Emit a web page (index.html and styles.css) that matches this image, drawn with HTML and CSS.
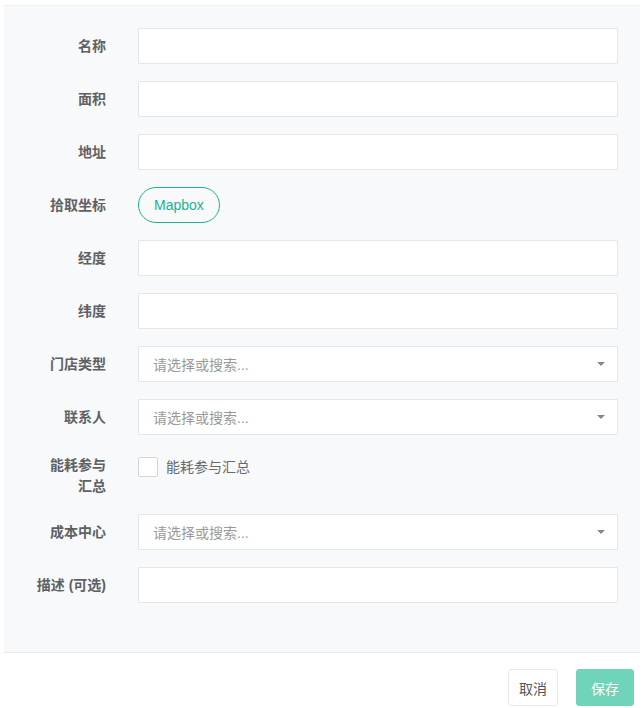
FILE: index.html
```html
<!DOCTYPE html>
<html lang="zh">
<head>
<meta charset="utf-8">
<link rel="stylesheet" href="styles.css">
</head>
<body>
<div class="panel">
  <div class="row"><label class="lbl">名称</label><div class="input"></div></div>
  <div class="row"><label class="lbl">面积</label><div class="input"></div></div>
  <div class="row"><label class="lbl">地址</label><div class="input"></div></div>
  <div class="row"><label class="lbl">拾取坐标</label><div><button class="pill">Mapbox</button></div></div>
  <div class="row"><label class="lbl">经度</label><div class="input"></div></div>
  <div class="row"><label class="lbl">纬度</label><div class="input"></div></div>
  <div class="row"><label class="lbl">门店类型</label><div class="input select"><span class="ph">请选择或搜索...</span><span class="caret"></span></div></div>
  <div class="row"><label class="lbl">联系人</label><div class="input select"><span class="ph">请选择或搜索...</span><span class="caret"></span></div></div>
  <div class="row row-check"><label class="lbl lbl-wrap">能耗参与汇总</label><div class="check"><span class="box"></span><span class="check-text">能耗参与汇总</span></div></div>
  <div class="row"><label class="lbl">成本中心</label><div class="input select"><span class="ph">请选择或搜索...</span><span class="caret"></span></div></div>
  <div class="row"><label class="lbl">描述 (可选)</label><div class="input"></div></div>
</div>
<div class="footer">
  <button class="btn btn-cancel">取消</button>
  <button class="btn btn-save">保存</button>
</div>
</body>
</html>
```

FILE: styles.css
```css
html, body {
  margin: 0;
  padding: 0;
  background: #ffffff;
  font-family: "Liberation Sans", "Noto Sans CJK SC", sans-serif;
  font-size: 14px;
  color: #676a6c;
}

.panel {
  margin: 5px 4px 0 4px;
  background: #f8f9fa;
  border-top: 1px solid #eef0f2;
  border-bottom: 1px solid #e7e9eb;
  padding: 22px 22px 49px 30px;
  display: flex;
  flex-direction: column;
  gap: 17px;
}

.row {
  display: grid;
  grid-template-columns: 72px 1fr;
  column-gap: 32px;
  align-items: center;
  min-height: 36px;
}

.row-check {
  align-items: start;
  min-height: 45px;
}

.lbl {
  text-align: right;
  font-weight: bold;
  color: #5e6163;
  line-height: 20px;
}

.lbl-wrap {
  justify-self: end;
  max-width: 58px;
  line-height: 21px;
  padding-top: 3px;
}

.input {
  height: 36px;
  box-sizing: border-box;
  background: #ffffff;
  border: 1px solid #e5e6e7;
  border-radius: 1px;
}

.select {
  display: flex;
  align-items: center;
  justify-content: space-between;
  padding: 0 12px 0 14px;
}

.ph {
  color: #999999;
  font-size: 14px;
}

.caret {
  width: 0;
  height: 0;
  border-left: 4px solid transparent;
  border-right: 4px solid transparent;
  border-top: 4px solid #888888;
}

.pill {
  height: 36px;
  padding: 0 15px;
  background: transparent;
  border: 1px solid #1ab394;
  border-radius: 18px;
  color: #1ab394;
  font-family: "Liberation Sans", "Noto Sans CJK SC", sans-serif;
  font-size: 14px;
}

.check {
  display: flex;
  align-items: center;
  gap: 8px;
  padding-top: 5px;
}

.box {
  width: 18px;
  height: 18px;
  border: 1px solid #d5d5d5;
  border-radius: 2px;
  background: #ffffff;
}

.check-text {
  color: #676a6c;
  margin-top: -3px;
}

.footer {
  display: flex;
  justify-content: flex-end;
  gap: 18px;
  padding: 16px 10px 0 0;
}

.btn {
  height: 37px;
  border-radius: 3px;
  font-family: "Liberation Sans", "Noto Sans CJK SC", sans-serif;
  font-size: 14px;
  padding: 0;
}

.btn-cancel {
  width: 50px;
  background: #ffffff;
  border: 1px solid #e7eaec;
  color: #555555;
}

.btn-save {
  width: 58px;
  background: #6fd4b9;
  border: 1px solid #6fd4b9;
  color: #ffffff;
}
```
